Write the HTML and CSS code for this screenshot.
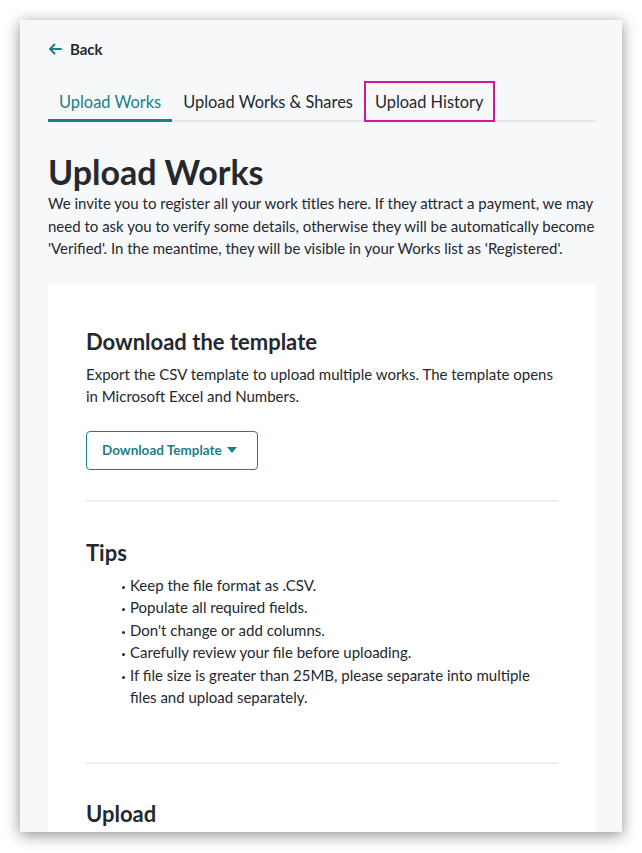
FILE: index.html
```html
<!DOCTYPE html>
<html lang="en">
<head>
    <meta charset="UTF-8">
    <meta name="viewport" content="width=device-width, initial-scale=1.0">
    <title>Upload Works</title>
    <link rel="stylesheet" href="styles.css">
</head>
<body>

    <div class="frame">
        <!-- Back link -->
        <a class="back-link" href="#">
            <svg class="back-icon" width="14" height="12" viewBox="0 0 14 12">
                <path d="M13 6H2M6.5 1.5L2 6l4.5 4.5" fill="none" stroke="#1b7f86" stroke-width="2" stroke-linecap="round" stroke-linejoin="round"/>
            </svg>
            Back
        </a>

        <!-- Tabs -->
        <div class="tabs">
            <div class="tab active">Upload Works</div>
            <div class="tab">Upload Works &amp; Shares</div>
            <div class="tab highlighted">Upload History</div>
        </div>

        <h1 class="page-title">Upload Works</h1>
        <p class="intro">We invite you to register all your work titles here. If they attract a payment, we may need to ask you to verify some details, otherwise they will be automatically become 'Verified'. In the meantime, they will be visible in your Works list as 'Registered'.</p>

        <!-- Card -->
        <div class="card">
            <div class="section download">
                <h2>Download the template</h2>
                <p>Export the CSV template to upload multiple works. The template opens in Microsoft Excel and Numbers.</p>
                <button class="template-btn">Download Template <span class="caret"></span></button>
            </div>

            <div class="section tips-section">
                <h2>Tips</h2>
                <ul class="tips">
                    <li>Keep the file format as .CSV.</li>
                    <li>Populate all required fields.</li>
                    <li>Don't change or add columns.</li>
                    <li>Carefully review your file before uploading.</li>
                    <li>If file size is greater than 25MB, please separate into multiple files and upload separately.</li>
                </ul>
            </div>

            <div class="section upload">
                <h2>Upload</h2>
            </div>
        </div>
    </div>

</body>
</html>
```

FILE: styles.css
```css
body {
    margin: 0;
    background: white;
    font-family: Lato, "Open Sans", Arial, sans-serif;
    color: #25282d;
}

/* Screenshot frame */
.frame {
    box-sizing: border-box;
    margin: 20px;
    width: 602px;
    height: 812px;
    padding: 0 26px 0 28px;
    background: #f7f8fa;
    box-shadow: 0 3px 14px rgba(0, 0, 0, 0.45);
    overflow: hidden;
}

/* Back link */
.back-link {
    display: inline-flex;
    align-items: center;
    gap: 8px;
    margin-top: 19px;
    font-size: 15px;
    font-weight: bold;
    color: #25282d;
    text-decoration: none;
    line-height: 20px;
}

/* Tabs */
.tabs {
    display: flex;
    margin-top: 22px;
    border-bottom: 2px solid #e4e6e9;
}
.tab {
    padding: 0 11px;
    height: 41px;
    line-height: 41px;
    font-size: 16.4px;
    color: #25282d;
    margin-bottom: -2px;
    border-bottom: 3px solid transparent;
    box-sizing: border-box;
}
.tab.active {
    color: #1b7f86;
    border-bottom-color: #1b7f86;
}
.tab.highlighted {
    border-bottom: none;
    outline: 2px solid #d4169f;
    outline-offset: -2px;
}

/* Intro */
.page-title {
    font-size: 34px;
    font-weight: bold;
    margin: 30px 0 0;
    line-height: 40px;
}
.intro {
    margin: 0;
    font-size: 15px;
    line-height: 22.5px;
}

/* Card */
.card {
    background: white;
    border-radius: 5px;
    margin-top: 24px;
    padding: 0 38px;
}
.section {
    padding: 37px 0 30px;
    border-bottom: 2px solid #eceef0;
}
.section.download {
    padding-top: 44px;
}
.section.tips-section {
    padding-bottom: 53px;
}
.section.upload {
    padding-top: 36px;
}
.section:last-child {
    border-bottom: none;
}
.section h2 {
    font-size: 22px;
    font-weight: bold;
    margin: 0;
    line-height: 28px;
}
.section p {
    margin: 7px 0 0;
    font-size: 15px;
    line-height: 22.5px;
}

.template-btn {
    margin-top: 23px;
    height: 39px;
    padding: 0 20px 0 15px;
    background: white;
    border: 1px solid #1b7f86;
    border-radius: 4px;
    color: #1b7f86;
    font-family: inherit;
    font-size: 13.5px;
    font-weight: bold;
    display: inline-flex;
    align-items: center;
    gap: 5px;
}
.caret {
    width: 0;
    height: 0;
    border-left: 5px solid transparent;
    border-right: 5px solid transparent;
    border-top: 6px solid #1b7f86;
}

/* Tips list */
.tips {
    margin: 7px 0 0;
    padding-left: 36px;
    list-style: none;
    font-size: 15px;
    line-height: 22.5px;
}
.tips li {
    position: relative;
    padding-left: 8px;
}
.tips li::before {
    content: "";
    position: absolute;
    left: 0;
    top: 12px;
    width: 3px;
    height: 3px;
    border-radius: 50%;
    background: #25282d;
}
```
